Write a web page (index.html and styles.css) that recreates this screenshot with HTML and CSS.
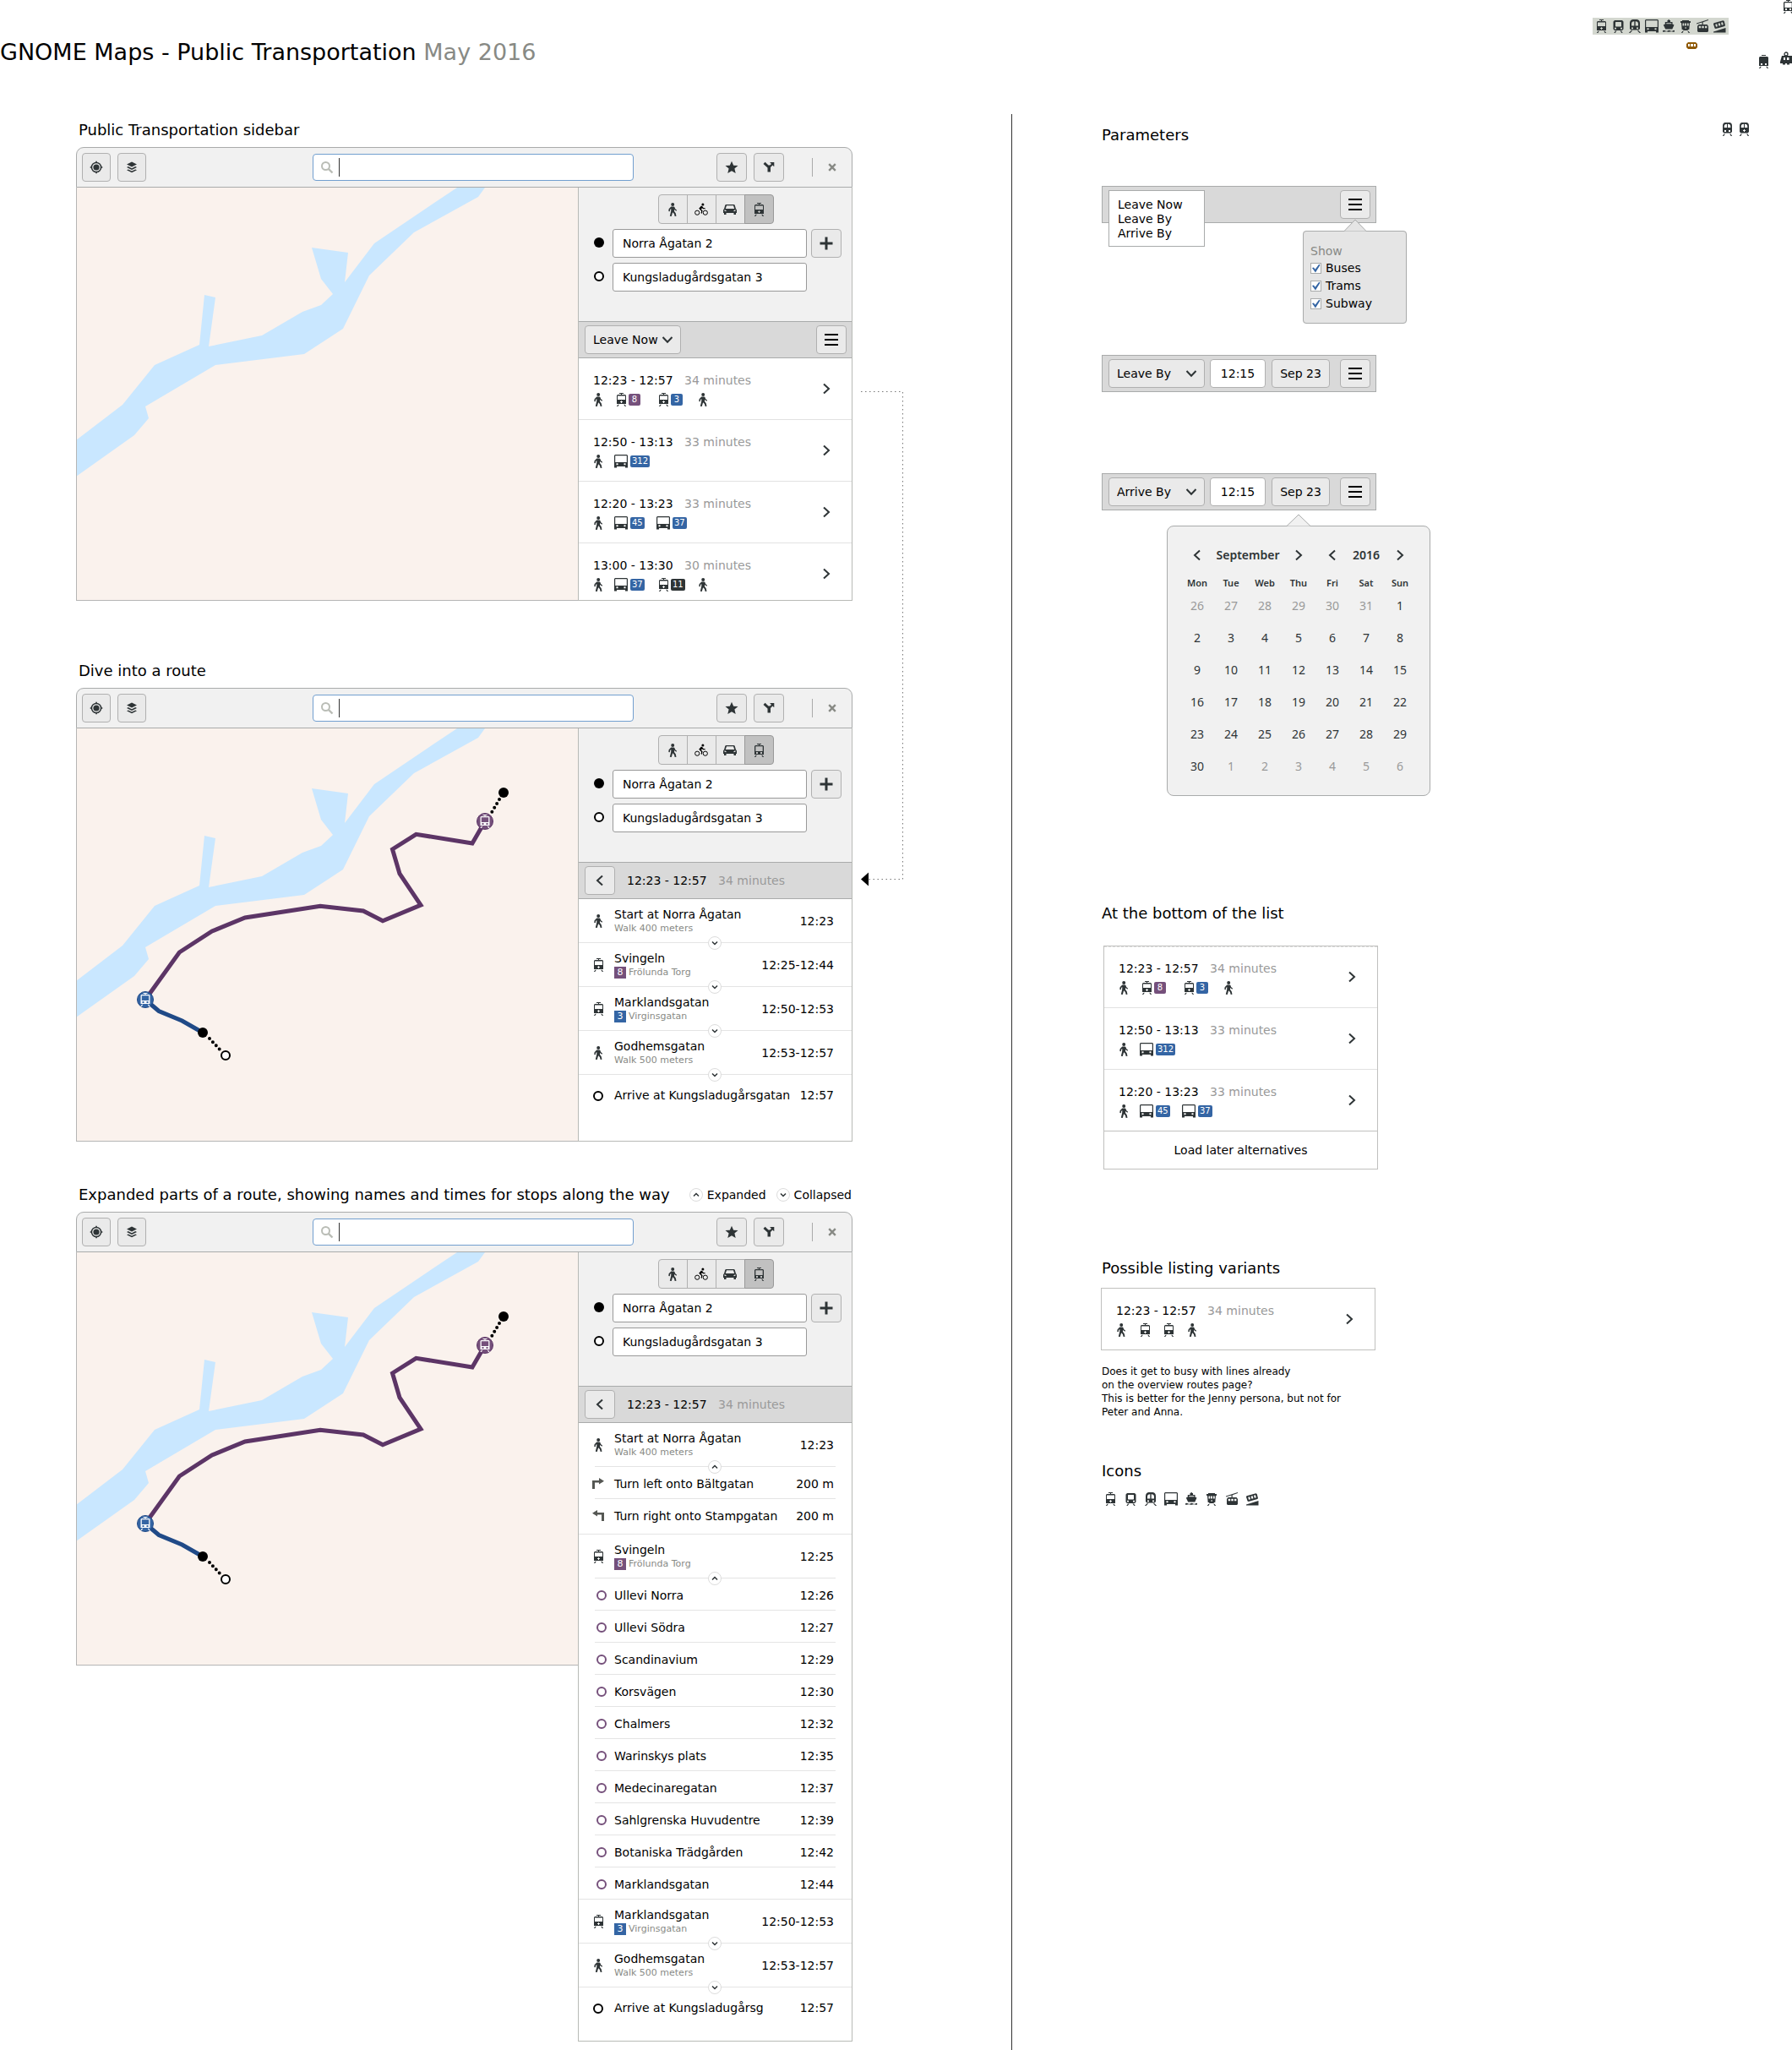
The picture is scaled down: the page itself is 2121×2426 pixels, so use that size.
FILE: index.html
```html
<!DOCTYPE html>
<html lang="en">
<head>
<meta charset="utf-8">
<meta name="viewport" content="width=device-width, initial-scale=1">
<title>GNOME Maps - Public Transportation</title>
<link rel="stylesheet" href="styles.css">
</head>
<body>
<svg class="sprite" aria-hidden="true">
  <symbol id="i-walk" viewBox="0 0 16 16"><circle cx="8.2" cy="2" r="2"/><path d="M6.3 4.4h3.2l.9.5.7 2 2 1.8-.7 1-2.3-1.6-.1 2 1.7 2.2.8 3.5-1.8.2-.8-2.9-1.8-1.9-1.3 4.8-2-.3L6.200 10l.1-3-1.200 1-.3 2.200-1.500-.1.300-2.900z"/></symbol>
  <symbol id="i-bike" viewBox="0 0 16 16"><circle cx="9.900" cy="1.900" r="1.500"/><path d="M5.200 6.700 8 3.600l1.600 1 1 1.500 2.100.2v1l-2.700-.1-.9-1-1.300 1.300 1.800 1.700-.9 3.500-1.100-.2.500-2.800z"/><g fill="none" stroke="currentColor"><circle cx="3.200" cy="11.700" r="2.600"/><circle cx="12.800" cy="11.700" r="2.600"/></g></symbol>
  <symbol id="i-car" viewBox="0 0 16 16"><path fill-rule="evenodd" d="M3.500 2h9q1 0 1.300 1L15 7.200q1 .5 1 1.500V12h-1v2h-2.500v-2h-9v2H1v-2H0V8.700q0-1 1-1.500L2.200 3q.3-1 1.300-1zM4 3.300 2.800 7h10.400L12 3.300zM1.500 8.300v1.500l2 .4v-1.300zM14.500 8.300l-2 .6v1.300l2-.4z"/></symbol>
  <symbol id="i-tram" viewBox="0 0 16 16"><path fill-rule="evenodd" d="M6 0h5v1H6zM8 1h1v1H8zM4 2h9l1 1v10H3V3zM4 3.400V8h9V3.400zM8 9.200h1V10h.9v1H9v.9H8V11h-.9v-1H8z"/><path d="M4.500 13.800h1.300L4.300 16H2.800zM12.500 13.800h-1.300l1.500 2.200h1.500z"/></symbol>
  <symbol id="i-tram-dots" viewBox="0 0 16 16"><path fill-rule="evenodd" d="M6 0h5v1H6zM8 1h1v1H8zM4 2h9l1 1v10H3V3zM4.300 3.300V9h8.400V3.300zM5 10v2h2v-2zM10 10v2h2v-2z"/><path d="M4.500 13.800h1.300L4.300 16H2.800zM12.500 13.800h-1.300l1.500 2.200h1.500z"/></symbol>
  <symbol id="i-tram-solid" viewBox="0 0 16 16"><path fill-rule="evenodd" d="M6 0h5v1H6zM4 2h9l1 1v10H3V3zM5 10v2h2v-2zM10 10v2h2v-2z"/><path d="M4.500 13.800h1.300L4.300 16H2.800zM12.500 13.800h-1.300l1.500 2.200h1.500z"/></symbol>
  <symbol id="i-metro" viewBox="0 0 16 16"><path fill-rule="evenodd" d="M4 1h9l1.500 1.500v9L13 13H4l-1.500-1.500v-9zM5.500 3 5 3.500V8l.5.500h6L12 8V3.500l-.5-.5zM4 9.800v1.700h2V9.800zM11 9.800v1.700h2V9.800z"/><path d="M5 13.600h1.500L4.700 16H3.300zM12 13.600h-1.500l1.800 2.400h1.400z"/></symbol>
  <symbol id="i-train" viewBox="0 0 16 16"><path fill-rule="evenodd" d="M5.500 0h5q3.500.5 3.500 4.500v6.500L12.500 12.500h-9L2 11V4.500Q2 .5 5.500 0zM7.300 2.200Q4 2.200 4 5.500V7.500h3.300zM8.700 2.200V7.500H12V5.500Q12 2.200 8.700 2.200zM4 9.500v1.700h2V9.500zM10 9.500v1.700h2V9.500z"/><path d="M3.500 13.300h1.700L2.500 16H.9zM12.500 13.300h-1.700L13.500 16h1.600z"/></symbol>
  <symbol id="i-train-small" viewBox="0 0 16 16"><path fill-rule="evenodd" d="M5.500 0h6Q14 .5 14 4v7l-1.500 1.500h-8L3 11V4Q3 .5 5.500 0zM8 1.800Q4.700 1.800 4.700 5v1H8zM9 1.800V6h3.300V5Q12.300 1.800 9 1.800zM5 9v2h2V9zM10 9v2h2V9z"/><path d="M4.500 13.600h1.300L4.300 16H2.800zM12.500 13.600h-1.300l1.500 2.400h1.500z"/></symbol>
  <symbol id="i-train-lamp" viewBox="0 0 16 16"><path fill-rule="evenodd" d="M5.500 0h6Q14 .5 14 4v7l-1.500 1.500h-8L3 11V4Q3 .5 5.500 0zM8 1.800Q4.700 1.800 4.700 5v1H8zM9 1.800V6h3.300V5Q12.300 1.800 9 1.800zM8 8h1v1h1v1H9v1H8v-1H7V9h1z"/><path d="M4.500 13.600h1.300L4.300 16H2.800zM12.500 13.600h-1.300l1.500 2.400h1.500z"/></symbol>
  <symbol id="i-bus" viewBox="0 0 16 16"><path fill-rule="evenodd" d="M1 0h14l1 1v14.500h-3V14H3v1.500H0V1zM1.200 1.300V9h13.600V1.300zM2.500 10.300v2h2v-2zM11.500 10.300v2h2v-2z"/></symbol>
  <symbol id="i-ship" viewBox="0 0 16 16"><path fill-rule="evenodd" d="M6.500 1h1V0h1.300v1H10v2h2.500v2.500l2 1-2.200 5H4.200L1.800 6.500l2-1V3h2.700zM5.300 4.200v1h6v-1z"/><path d="M1 13.200q1.500-1 3 0t3 0 3 0 3 0 2 0v1.300q-1.500.5-2.500 0t-3 0-3 0-3 0-2.500 0z"/></symbol>
  <symbol id="i-trolley" viewBox="0 0 16 16"><path fill-rule="evenodd" d="M4 1h8v1h2v2h-1l-.7 8h-1.300l-.5 1h-5L5 12H3.700L3 4H2V2h2zM4.500 4.500v3h1.800v-3zM7.200 4.500v3H9v-3zM10 4.500v3h1.700v-3zM7.500 9.200v1.500h1.300V9.200z"/><path d="M4.500 13.800h1.300L4.300 16H2.800zM11.500 13.800h-1.300l1.500 2.200h1.500z"/></symbol>
  <symbol id="i-cable" viewBox="0 0 16 16"><path fill-rule="evenodd" d="M1 4.600 15 0v1L8.700 3.200V6h4.800l1.500 2v6l-1 1H3l-1-1V8l1.500-2h4V3.600L1 5.600zM3.700 7.700v2.600h2.500V7.700zM7.300 7.700v2.600h2.500V7.700zM11 7.700v2.600h2.400V7.700z"/></symbol>
  <symbol id="i-funicular" viewBox="0 0 16 16"><path fill-rule="evenodd" d="M1.600 4.200 12.500 1.200l1.200.8 1.300 5-.7 1L3.800 11l-1.200-.6L.9 5.300zM3.200 5.700l.8 3 2-.5-.8-3zM6.600 4.800l.8 3 2-.6-.8-3zM10 3.800l.8 3 2-.6-.8-3z"/><path d="M1 14.500 15.500 10v5.500H1z"/></symbol>
  <symbol id="i-loco" viewBox="0 0 16 16"><path fill-rule="evenodd" d="M3 5h13v9H1v-2zM5 7v3h2V7zM9 7v3h2.500V7z"/><path d="M4 13.500h3v2H4zM9 13.500h3v2H9z"/><circle cx="8" cy="3" r="2" fill="none" stroke="currentColor" stroke-width="1.300"/></symbol>
  <symbol id="i-locate" viewBox="0 0 16 16"><circle cx="8" cy="8" r="3.600"/><circle cx="8" cy="8" r="5.600" fill="none" stroke="currentColor" stroke-width="1.500"/><path d="M7.200.7h1.600v2H7.200zM7.200 13.300h1.600v2H7.200zM.7 7.200h2v1.600h-2zM13.300 7.200h2v1.600h-2z"/></symbol>
  <symbol id="i-layers" viewBox="0 0 16 16"><path d="M8 1.500 14 4.500 8 7.500 2 4.500zM2 8l1.800-.9L8 9.200l4.200-2.100L14 8l-6 3zM2 11.300l1.800-.9L8 12.500l4.200-2.100 1.800.9-6 3z"/></symbol>
  <symbol id="i-search" viewBox="0 0 16 16"><g fill="none" stroke="currentColor" stroke-width="2"><circle cx="6.500" cy="6.500" r="4.500"/><path d="m9.800 9.800 4.700 4.700" stroke-width="2.400"/></g></symbol>
  <symbol id="i-star" viewBox="0 0 16 16"><path d="m8 .8 2.200 4.900 5.300.4-4.100 3.500 1.300 5.400L8 12.200 3.300 15l1.300-5.400L.5 6.100l5.300-.4z"/></symbol>
  <symbol id="i-route" viewBox="0 0 16 16"><path d="M1.500 4 3.600 1.800l3.900 3.700h1.800L11 4 9.300 2.300V2h5v5H14l-1.600-1.600L10 8v5.500H6.500V8.500z"/></symbol>
  <symbol id="i-close" viewBox="0 0 16 16"><path d="m4.200 4.200 7.600 7.600m0-7.600-7.600 7.600" stroke="currentColor" stroke-width="2.400"/></symbol>
  <symbol id="i-plus" viewBox="0 0 16 16"><path d="M6.500.5h3v6h6v3h-6v6h-3v-6h-6v-3h6z"/></symbol>
  <symbol id="i-menu" viewBox="0 0 16 16"><path d="M0 1h16v2H0zM0 7h16v2H0zM0 13h16v2H0z"/></symbol>
  <symbol id="i-down" viewBox="0 0 16 16"><path d="m2.500 5 5.500 5.700L13.500 5" fill="none" stroke="currentColor" stroke-width="2"/></symbol>
  <symbol id="i-next" viewBox="0 0 16 16"><path d="M5 2.500 11 8l-6 5.500" fill="none" stroke="currentColor" stroke-width="2"/></symbol>
  <symbol id="i-prev" viewBox="0 0 16 16"><path d="M11 2.500 5 8l6 5.500" fill="none" stroke="currentColor" stroke-width="2"/></symbol>
  <symbol id="i-small-down" viewBox="0 0 16 16"><path d="m5 6.500 3 3 3-3" fill="none" stroke="currentColor" stroke-width="1.500"/></symbol>
  <symbol id="i-small-up" viewBox="0 0 16 16"><path d="m5 9.500 3-3 3 3" fill="none" stroke="currentColor" stroke-width="1.500"/></symbol>
  <symbol id="i-dot" viewBox="0 0 16 16"><circle cx="8" cy="8" r="6"/></symbol>
  <symbol id="i-ring" viewBox="0 0 16 16"><circle cx="8" cy="8" r="5" fill="#fff" stroke="currentColor" stroke-width="2"/></symbol>
  <symbol id="i-turn-right" viewBox="0 0 16 16"><path d="M1 14V4h8V1l6 3.800-6 3.700V6.500H4V14z"/></symbol>
  <symbol id="i-turn-left" viewBox="0 0 16 16"><path d="M15 14V4H7V1L1 4.800l6 3.700V6.500h5V14z"/></symbol>
  <symbol id="map-river" viewBox="0 0 593 488"><path fill="#c9e7ff" d="M-1 299 54 257 92 210 145 186 151 127 164 130 156 188 219 175 267 147 289 139 303 126 289 108 278 71 321 77 317 112 352 66 429 14 450 0H483L475 11 399 53 346 104 315 167 269 197 164 210 81 259 85 273 68 293 -1 342z"/></symbol>
  <symbol id="map-route" viewBox="0 0 593 488">
    <path d="M483 110 468 136 401.500 125.300 373.500 143 382 172 407 209 362 227.700 339 216 288 210.300 199 224 160 240 121.300 265 81 321" fill="none" stroke="#5c3566" stroke-width="5"/>
    <path d="M81 321 97 334.500 124.500 346 149 360" fill="none" stroke="#204a87" stroke-width="5"/>
    <path d="M500 84 490 101M157 367 171 382" fill="none" stroke="#000" stroke-width="4" stroke-linecap="round" stroke-dasharray="0 5.700"/>
    <circle cx="505" cy="76" r="6"/><circle cx="149" cy="360" r="6"/>
    <circle cx="176" cy="387" r="5" fill="#fff" stroke="#000" stroke-width="2"/>
    <circle cx="483" cy="110" r="9.500" fill="#75507b" stroke="#5c3566"/>
    <circle cx="81" cy="321" r="9.500" fill="#3465a4" stroke="#204a87"/>
    <use href="#i-tram-dots" x="474.500" y="102" width="16" height="16" fill="#fff"/>
    <use href="#i-tram-dots" x="72.500" y="313" width="16" height="16" fill="#fff"/>
  </symbol>
</svg>

<div class="page">
  <header class="page__head">
    <h1 class="page__title">GNOME Maps - Public Transportation <span class="muted-title">May 2016</span></h1>
  </header>

  <div class="scrap" aria-hidden="true">
    <div class="scrap__strip">
      <svg class="icon"><use href="#i-tram"/></svg><svg class="icon"><use href="#i-metro"/></svg><svg class="icon"><use href="#i-train"/></svg><svg class="icon"><use href="#i-bus"/></svg><svg class="icon"><use href="#i-ship"/></svg><svg class="icon"><use href="#i-trolley"/></svg><svg class="icon"><use href="#i-cable"/></svg><svg class="icon"><use href="#i-funicular"/></svg>
    </div>
    <svg class="scrap__car" viewBox="0 0 13 8"><path fill="#8f5902" fill-rule="evenodd" d="M2 0h9l2 2v4l-2 2H2L0 6V2zM2 2v3h2V2zM5 2v3h3V2zM9 2v3h2V2z"/></svg>
    <svg class="icon scrap__tram"><use href="#i-tram-dots"/></svg>
    <svg class="icon scrap__solid"><use href="#i-tram-solid"/></svg>
    <svg class="icon scrap__loco"><use href="#i-loco"/></svg>
    <svg class="icon scrap__train-a"><use href="#i-train-small"/></svg>
    <svg class="icon scrap__train-b"><use href="#i-train-lamp"/></svg>
  </div>

  <main class="board">
    <div class="flow">
      <div class="flow__screens">

        <section class="screen">
          <div class="screen__head"><h2 class="heading">Public Transportation sidebar</h2></div>
          <div class="window window--clipped">
            <div class="headerbar">
              <div class="headerbar__start">
                <button class="btn btn--square" aria-label="Current location"><svg class="icon"><use href="#i-locate"/></svg></button>
                <button class="btn btn--square" aria-label="Layers"><svg class="icon"><use href="#i-layers"/></svg></button>
              </div>
              <label class="search"><svg class="icon search__icon"><use href="#i-search"/></svg><span class="search__caret"></span><input class="search__input" type="text" aria-label="Search"></label>
              <div class="headerbar__end">
                <button class="btn" aria-label="Favorites"><svg class="icon"><use href="#i-star"/></svg></button>
                <button class="btn" aria-label="Route planner"><svg class="icon"><use href="#i-route"/></svg></button>
                <span class="headerbar__rule"></span>
                <button class="close" aria-label="Close"><svg class="icon"><use href="#i-close"/></svg></button>
              </div>
            </div>
            <div class="window__body">
              <div class="map"><svg class="map__layer" preserveAspectRatio="xMidYMid slice" viewBox="0 0 593 488"><use href="#map-river"/></svg></div>
              <aside class="sidebar">
                <div class="planner">
                  <div class="modes">
                    <button class="modes__item" aria-label="Walk"><svg class="icon"><use href="#i-walk"/></svg></button><button class="modes__item modes__item--black" aria-label="Bike"><svg class="icon"><use href="#i-bike"/></svg></button><button class="modes__item" aria-label="Car"><svg class="icon"><use href="#i-car"/></svg></button><button class="modes__item modes__item--on" aria-label="Transit" aria-pressed="true"><svg class="icon"><use href="#i-tram"/></svg></button>
                  </div>
                  <div class="place"><svg class="icon"><use href="#i-dot"/></svg><input class="place__input" type="text" aria-label="From" value="Norra Ågatan 2"><button class="btn" aria-label="Add stop"><svg class="icon"><use href="#i-plus"/></svg></button></div>
                  <div class="place"><svg class="icon"><use href="#i-ring"/></svg><input class="place__input" type="text" aria-label="To" value="Kungsladugårdsgatan 3"></div>
                </div>
                <div class="bar">
                  <span class="drop"><select class="drop__select" aria-label="Time"><option>Leave Now</option></select><svg class="icon drop__arrow"><use href="#i-down"/></svg></span>
                  <button class="btn bar__menu" aria-label="Options"><svg class="icon icon--black"><use href="#i-menu"/></svg></button>
                </div>
                <div class="trips">
                  <a class="trip" href="#route"><span class="trip__main"><span class="trip__when">12:23 - 12:57 <span class="trip__len">34 minutes</span></span><span class="legs"><span class="leg"><svg class="icon"><use href="#i-walk"/></svg></span><span class="leg"><svg class="icon"><use href="#i-tram"/></svg><span class="line line--purple">8</span></span><span class="leg"><svg class="icon"><use href="#i-tram"/></svg><span class="line">3</span></span><span class="leg"><svg class="icon"><use href="#i-walk"/></svg></span></span></span><svg class="icon trip__go"><use href="#i-next"/></svg></a>
                  <a class="trip" href="#route"><span class="trip__main"><span class="trip__when">12:50 - 13:13 <span class="trip__len">33 minutes</span></span><span class="legs"><span class="leg"><svg class="icon"><use href="#i-walk"/></svg></span><span class="leg leg--bus"><svg class="icon"><use href="#i-bus"/></svg><span class="line">312</span></span></span></span><svg class="icon trip__go"><use href="#i-next"/></svg></a>
                  <a class="trip" href="#route"><span class="trip__main"><span class="trip__when">12:20 - 13:23 <span class="trip__len">33 minutes</span></span><span class="legs"><span class="leg"><svg class="icon"><use href="#i-walk"/></svg></span><span class="leg leg--bus"><svg class="icon"><use href="#i-bus"/></svg><span class="line">45</span></span><span class="leg leg--bus"><svg class="icon"><use href="#i-bus"/></svg><span class="line">37</span></span></span></span><svg class="icon trip__go"><use href="#i-next"/></svg></a>
                  <a class="trip" href="#route"><span class="trip__main"><span class="trip__when">13:00 - 13:30 <span class="trip__len">30 minutes</span></span><span class="legs"><span class="leg"><svg class="icon"><use href="#i-walk"/></svg></span><span class="leg leg--bus"><svg class="icon"><use href="#i-bus"/></svg><span class="line">37</span></span><span class="leg"><svg class="icon"><use href="#i-tram"/></svg><span class="line line--dark">11</span></span><span class="leg"><svg class="icon"><use href="#i-walk"/></svg></span></span></span><svg class="icon trip__go"><use href="#i-next"/></svg></a>
                </div>
              </aside>
            </div>
          </div>
        </section>

        <section class="screen screen--route" id="route">
          <div class="screen__head"><h2 class="heading">Dive into a route</h2></div>
          <div class="window">
            <div class="headerbar">
              <div class="headerbar__start">
                <button class="btn btn--square" aria-label="Current location"><svg class="icon"><use href="#i-locate"/></svg></button>
                <button class="btn btn--square" aria-label="Layers"><svg class="icon"><use href="#i-layers"/></svg></button>
              </div>
              <label class="search"><svg class="icon search__icon"><use href="#i-search"/></svg><span class="search__caret"></span><input class="search__input" type="text" aria-label="Search"></label>
              <div class="headerbar__end">
                <button class="btn" aria-label="Favorites"><svg class="icon"><use href="#i-star"/></svg></button>
                <button class="btn" aria-label="Route planner"><svg class="icon"><use href="#i-route"/></svg></button>
                <span class="headerbar__rule"></span>
                <button class="close" aria-label="Close"><svg class="icon"><use href="#i-close"/></svg></button>
              </div>
            </div>
            <div class="window__body">
              <div class="map"><svg class="map__layer" preserveAspectRatio="xMidYMid slice" viewBox="0 0 593 488"><use href="#map-river"/><use href="#map-route"/></svg></div>
              <aside class="sidebar">
                <div class="planner">
                  <div class="modes">
                    <button class="modes__item" aria-label="Walk"><svg class="icon"><use href="#i-walk"/></svg></button><button class="modes__item modes__item--black" aria-label="Bike"><svg class="icon"><use href="#i-bike"/></svg></button><button class="modes__item" aria-label="Car"><svg class="icon"><use href="#i-car"/></svg></button><button class="modes__item modes__item--on" aria-label="Transit" aria-pressed="true"><svg class="icon"><use href="#i-tram-dots"/></svg></button>
                  </div>
                  <div class="place"><svg class="icon"><use href="#i-dot"/></svg><input class="place__input" type="text" aria-label="From" value="Norra Ågatan 2"><button class="btn" aria-label="Add stop"><svg class="icon"><use href="#i-plus"/></svg></button></div>
                  <div class="place"><svg class="icon"><use href="#i-ring"/></svg><input class="place__input" type="text" aria-label="To" value="Kungsladugårdsgatan 3"></div>
                </div>
                <div class="bar">
                  <button class="btn" aria-label="Back"><svg class="icon"><use href="#i-prev"/></svg></button>
                  <span class="bar__when">12:23 - 12:57 <span class="trip__len">34 minutes</span></span>
                </div>
                <ol class="steps">
                  <li class="step"><svg class="icon"><use href="#i-walk"/></svg><span class="step__text">Start at Norra Ågatan<span class="step__sub">Walk 400 meters</span></span><time>12:23</time><button class="fold" aria-label="Expand"><svg class="icon"><use href="#i-small-down"/></svg></button></li>
                  <li class="step"><svg class="icon"><use href="#i-tram"/></svg><span class="step__text">Svingeln<span class="step__sub"><b class="num num--purple">8</b>Frölunda Torg</span></span><time>12:25-12:44</time><button class="fold" aria-label="Expand"><svg class="icon"><use href="#i-small-down"/></svg></button></li>
                  <li class="step"><svg class="icon"><use href="#i-tram"/></svg><span class="step__text">Marklandsgatan<span class="step__sub"><b class="num">3</b>Virginsgatan</span></span><time>12:50-12:53</time><button class="fold" aria-label="Expand"><svg class="icon"><use href="#i-small-down"/></svg></button></li>
                  <li class="step"><svg class="icon"><use href="#i-walk"/></svg><span class="step__text">Godhemsgatan<span class="step__sub">Walk 500 meters</span></span><time>12:53-12:57</time><button class="fold" aria-label="Expand"><svg class="icon"><use href="#i-small-down"/></svg></button></li>
                  <li class="step step--end"><svg class="icon icon--black"><use href="#i-ring"/></svg><span class="step__text">Arrive at Kungsladugårsgatan</span><time>12:57</time></li>
                </ol>
              </aside>
            </div>
          </div>
        </section>

        <section class="screen screen--expanded">
          <div class="screen__head">
            <h2 class="heading">Expanded parts of a route, showing names and times for stops along the way</h2>
            <span class="legend"><span class="fold fold--key"><svg class="icon"><use href="#i-small-up"/></svg></span>Expanded</span>
            <span class="legend"><span class="fold fold--key"><svg class="icon"><use href="#i-small-down"/></svg></span>Collapsed</span>
          </div>
          <div class="window">
            <div class="headerbar">
              <div class="headerbar__start">
                <button class="btn btn--square" aria-label="Current location"><svg class="icon"><use href="#i-locate"/></svg></button>
                <button class="btn btn--square" aria-label="Layers"><svg class="icon"><use href="#i-layers"/></svg></button>
              </div>
              <label class="search"><svg class="icon search__icon"><use href="#i-search"/></svg><span class="search__caret"></span><input class="search__input" type="text" aria-label="Search"></label>
              <div class="headerbar__end">
                <button class="btn" aria-label="Favorites"><svg class="icon"><use href="#i-star"/></svg></button>
                <button class="btn" aria-label="Route planner"><svg class="icon"><use href="#i-route"/></svg></button>
                <span class="headerbar__rule"></span>
                <button class="close" aria-label="Close"><svg class="icon"><use href="#i-close"/></svg></button>
              </div>
            </div>
            <div class="window__body">
              <div class="map"><svg class="map__layer" preserveAspectRatio="xMidYMid slice" viewBox="0 0 593 488"><use href="#map-river"/><use href="#map-route"/></svg></div>
              <aside class="sidebar">
                <div class="planner">
                  <div class="modes">
                    <button class="modes__item" aria-label="Walk"><svg class="icon"><use href="#i-walk"/></svg></button><button class="modes__item modes__item--black" aria-label="Bike"><svg class="icon"><use href="#i-bike"/></svg></button><button class="modes__item" aria-label="Car"><svg class="icon"><use href="#i-car"/></svg></button><button class="modes__item modes__item--on" aria-label="Transit" aria-pressed="true"><svg class="icon"><use href="#i-tram-dots"/></svg></button>
                  </div>
                  <div class="place"><svg class="icon"><use href="#i-dot"/></svg><input class="place__input" type="text" aria-label="From" value="Norra Ågatan 2"><button class="btn" aria-label="Add stop"><svg class="icon"><use href="#i-plus"/></svg></button></div>
                  <div class="place"><svg class="icon"><use href="#i-ring"/></svg><input class="place__input" type="text" aria-label="To" value="Kungsladugårdsgatan 3"></div>
                </div>
                <div class="bar">
                  <button class="btn" aria-label="Back"><svg class="icon"><use href="#i-prev"/></svg></button>
                  <span class="bar__when">12:23 - 12:57 <span class="trip__len">34 minutes</span></span>
                </div>
                <ol class="steps">
                  <li class="step step--open"><svg class="icon"><use href="#i-walk"/></svg><span class="step__text">Start at Norra Ågatan<span class="step__sub">Walk 400 meters</span></span><time>12:23</time><button class="fold" aria-label="Collapse"><svg class="icon"><use href="#i-small-up"/></svg></button></li>
                  <li class="step step--open step--stop"><svg class="icon icon--turn"><use href="#i-turn-right"/></svg><span class="step__text">Turn left onto Bältgatan</span><span>200 m</span></li>
                  <li class="step step--turn-last"><svg class="icon icon--turn"><use href="#i-turn-left"/></svg><span class="step__text">Turn right onto Stampgatan</span><span>200 m</span></li>
                  <li class="step step--open"><svg class="icon"><use href="#i-tram"/></svg><span class="step__text">Svingeln<span class="step__sub"><b class="num num--purple">8</b>Frölunda Torg</span></span><time>12:25</time><button class="fold" aria-label="Collapse"><svg class="icon"><use href="#i-small-up"/></svg></button></li>
                  <li class="step step--open step--stop"><svg class="icon icon--stop"><use href="#i-ring"/></svg><span class="step__text">Ullevi Norra</span><time>12:26</time></li>
                  <li class="step step--open step--stop"><svg class="icon icon--stop"><use href="#i-ring"/></svg><span class="step__text">Ullevi Södra</span><time>12:27</time></li>
                  <li class="step step--open step--stop"><svg class="icon icon--stop"><use href="#i-ring"/></svg><span class="step__text">Scandinavium</span><time>12:29</time></li>
                  <li class="step step--open step--stop"><svg class="icon icon--stop"><use href="#i-ring"/></svg><span class="step__text">Korsvägen</span><time>12:30</time></li>
                  <li class="step step--open step--stop"><svg class="icon icon--stop"><use href="#i-ring"/></svg><span class="step__text">Chalmers</span><time>12:32</time></li>
                  <li class="step step--open step--stop"><svg class="icon icon--stop"><use href="#i-ring"/></svg><span class="step__text">Warinskys plats</span><time>12:35</time></li>
                  <li class="step step--open step--stop"><svg class="icon icon--stop"><use href="#i-ring"/></svg><span class="step__text">Medecinaregatan</span><time>12:37</time></li>
                  <li class="step step--open step--stop"><svg class="icon icon--stop"><use href="#i-ring"/></svg><span class="step__text">Sahlgrenska Huvudentre</span><time>12:39</time></li>
                  <li class="step step--open step--stop"><svg class="icon icon--stop"><use href="#i-ring"/></svg><span class="step__text">Botaniska Trädgården</span><time>12:42</time></li>
                  <li class="step step--stop"><svg class="icon icon--stop"><use href="#i-ring"/></svg><span class="step__text">Marklandsgatan</span><time>12:44</time></li>
                  <li class="step"><svg class="icon"><use href="#i-tram"/></svg><span class="step__text">Marklandsgatan<span class="step__sub"><b class="num">3</b>Virginsgatan</span></span><time>12:50-12:53</time><button class="fold" aria-label="Expand"><svg class="icon"><use href="#i-small-down"/></svg></button></li>
                  <li class="step"><svg class="icon"><use href="#i-walk"/></svg><span class="step__text">Godhemsgatan<span class="step__sub">Walk 500 meters</span></span><time>12:53-12:57</time><button class="fold" aria-label="Expand"><svg class="icon"><use href="#i-small-down"/></svg></button></li>
                  <li class="step step--end"><svg class="icon icon--black"><use href="#i-ring"/></svg><span class="step__text">Arrive at Kungsladugårsg</span><time>12:57</time></li>
                </ol>
              </aside>
            </div>
          </div>
        </section>
      </div>

      <svg class="connector" viewBox="0 0 52 588" aria-hidden="true"><path d="M0 .5H49.500V577.500H9" fill="none" stroke="#777" stroke-dasharray="1.500 3.500"/><path d="M0 577.500 9 569.500V585.500z"/></svg>
    </div>

    <div class="notes">
      <h2 class="heading">Parameters</h2>

      <div class="bar bar--solo bar--first">
        <ul class="options" role="listbox" aria-label="Time"><li role="option">Leave Now</li><li role="option">Leave By</li><li role="option">Arrive By</li></ul>
        <button class="btn bar__menu" aria-label="Options"><svg class="icon icon--black"><use href="#i-menu"/></svg></button>
        <fieldset class="popover">
          <svg class="popover__tip" viewBox="0 0 28 15"><path d="M1 14.500 14 1 27 14.500" /></svg>
          <legend class="popover__legend">Show</legend>
          <label class="check"><input type="checkbox" checked>Buses</label>
          <label class="check"><input type="checkbox" checked>Trams</label>
          <label class="check"><input type="checkbox" checked>Subway</label>
        </fieldset>
      </div>

      <div class="bar bar--solo bar--leave">
        <span class="drop"><select class="drop__select" aria-label="Time"><option>Leave By</option></select><svg class="icon drop__arrow"><use href="#i-down"/></svg></span>
        <input class="clock" type="text" aria-label="Clock" value="12:15">
        <button class="btn btn--date">Sep 23</button>
        <button class="btn bar__menu" aria-label="Options"><svg class="icon icon--black"><use href="#i-menu"/></svg></button>
      </div>

      <div class="bar bar--solo bar--arrive">
        <span class="drop"><select class="drop__select" aria-label="Time"><option>Arrive By</option></select><svg class="icon drop__arrow"><use href="#i-down"/></svg></span>
        <input class="clock" type="text" aria-label="Clock" value="12:15">
        <button class="btn btn--date">Sep 23</button>
        <button class="btn bar__menu" aria-label="Options"><svg class="icon icon--black"><use href="#i-menu"/></svg></button>
      </div>

      <div class="calendar">
        <svg class="calendar__tip" viewBox="0 0 28 15"><path d="M0 14.500 14 1 28 14.500"/></svg>
        <div class="calendar__nav">
          <button class="flat" aria-label="Previous month"><svg class="icon"><use href="#i-prev"/></svg></button><span class="calendar__month">September</span><button class="flat" aria-label="Next month"><svg class="icon"><use href="#i-next"/></svg></button><button class="flat" aria-label="Previous year"><svg class="icon"><use href="#i-prev"/></svg></button><span>2016</span><button class="flat" aria-label="Next year"><svg class="icon"><use href="#i-next"/></svg></button>
        </div>
        <table class="calendar__days">
          <thead><tr><th>Mon</th><th>Tue</th><th>Web</th><th>Thu</th><th>Fri</th><th>Sat</th><th>Sun</th></tr></thead>
          <tbody>
            <tr><td class="out">26</td><td class="out">27</td><td class="out">28</td><td class="out">29</td><td class="out">30</td><td class="out">31</td><td>1</td></tr>
            <tr><td>2</td><td>3</td><td>4</td><td>5</td><td>6</td><td>7</td><td>8</td></tr>
            <tr><td>9</td><td>10</td><td>11</td><td>12</td><td>13</td><td>14</td><td>15</td></tr>
            <tr><td>16</td><td>17</td><td>18</td><td>19</td><td>20</td><td>21</td><td>22</td></tr>
            <tr><td>23</td><td>24</td><td>25</td><td>26</td><td>27</td><td>28</td><td>29</td></tr>
            <tr><td>30</td><td class="out">1</td><td class="out">2</td><td class="out">3</td><td class="out">4</td><td class="out">5</td><td class="out">6</td></tr>
          </tbody>
        </table>
      </div>

      <h2 class="heading heading--list">At the bottom of the list</h2>
      <div class="card card--list">
        <a class="trip" href="#route"><span class="trip__main"><span class="trip__when">12:23 - 12:57 <span class="trip__len">34 minutes</span></span><span class="legs"><span class="leg"><svg class="icon"><use href="#i-walk"/></svg></span><span class="leg"><svg class="icon"><use href="#i-tram"/></svg><span class="line line--purple">8</span></span><span class="leg"><svg class="icon"><use href="#i-tram"/></svg><span class="line">3</span></span><span class="leg"><svg class="icon"><use href="#i-walk"/></svg></span></span></span><svg class="icon trip__go"><use href="#i-next"/></svg></a>
        <a class="trip" href="#route"><span class="trip__main"><span class="trip__when">12:50 - 13:13 <span class="trip__len">33 minutes</span></span><span class="legs"><span class="leg"><svg class="icon"><use href="#i-walk"/></svg></span><span class="leg leg--bus"><svg class="icon"><use href="#i-bus"/></svg><span class="line">312</span></span></span></span><svg class="icon trip__go"><use href="#i-next"/></svg></a>
        <a class="trip trip--last" href="#route"><span class="trip__main"><span class="trip__when">12:20 - 13:23 <span class="trip__len">33 minutes</span></span><span class="legs"><span class="leg"><svg class="icon"><use href="#i-walk"/></svg></span><span class="leg leg--bus"><svg class="icon"><use href="#i-bus"/></svg><span class="line">45</span></span><span class="leg leg--bus"><svg class="icon"><use href="#i-bus"/></svg><span class="line">37</span></span></span></span><svg class="icon trip__go"><use href="#i-next"/></svg></a>
        <button class="more">Load later alternatives</button>
      </div>

      <h2 class="heading heading--variants">Possible listing variants</h2>
      <div class="card card--variant">
        <a class="trip" href="#route"><span class="trip__main"><span class="trip__when">12:23 - 12:57 <span class="trip__len">34 minutes</span></span><span class="legs legs--plain"><svg class="icon"><use href="#i-walk"/></svg><svg class="icon"><use href="#i-tram"/></svg><svg class="icon"><use href="#i-tram"/></svg><svg class="icon"><use href="#i-walk"/></svg></span></span><svg class="icon trip__go"><use href="#i-next"/></svg></a>
      </div>
      <p class="remark">Does it get to busy with lines already<br>on the overview routes page?<br>This is better for the Jenny persona, but not for<br>Peter and Anna.</p>

      <h2 class="heading heading--icons">Icons</h2>
      <div class="iconset">
        <svg class="icon"><use href="#i-tram"/></svg><svg class="icon"><use href="#i-metro"/></svg><svg class="icon"><use href="#i-train"/></svg><svg class="icon"><use href="#i-bus"/></svg><svg class="icon"><use href="#i-ship"/></svg><svg class="icon"><use href="#i-trolley"/></svg><svg class="icon"><use href="#i-cable"/></svg><svg class="icon"><use href="#i-funicular"/></svg>
      </div>
    </div>
  </main>
</div>
</body>
</html>
```
FILE: styles.css
```css
*, *::before, *::after { box-sizing: border-box; }

:root {
  --ink: #2e3436;
  --line: #a9abab;
  --chrome: #f1f1f1;
}

body {
  margin: 0;
  background: #fff;
  color: #000;
  font: 14px/17px "DejaVu Sans", sans-serif;
}

button, input, select { font: inherit; color: inherit; margin: 0; }
button { display: flex; align-items: center; justify-content: center; padding: 0; }
ul, ol { list-style: none; margin: 0; padding: 0; }
h1, h2, p { margin: 0; }
a { color: inherit; text-decoration: none; }

.sprite { position: absolute; width: 0; height: 0; }

.icon { display: block; flex: none; width: 16px; height: 16px; fill: currentColor; color: var(--ink); }
.icon--black { color: #000; }
.icon--turn { color: #555753; }
.icon--stop { color: #75507b; }

/* Page frame */
.page { position: relative; display: flex; flex-direction: column; min-height: 100vh; overflow: hidden; }
.page__head { height: 135px; padding-top: 46px; }
.page__title { font-size: 27px; line-height: 32px; font-weight: 400; }
.muted-title { color: #888a85; }
.board { flex: 1; display: grid; grid-template-columns: minmax(0, 1197fr) minmax(0, 924fr); }
.heading { font-size: 18px; line-height: 22px; font-weight: 400; white-space: nowrap; }

/* Loose sketches in the corner of the canvas */
.scrap { position: absolute; top: 0; right: 0; width: 236px; height: 170px; }
.scrap__strip { display: flex; gap: 4px; width: 161px; height: 20px; padding: 2px 0 2px 2px; background: #d3d7cf; }
.scrap > * { position: absolute; }
.scrap__strip { left: 0; top: 21px; }
.scrap__car { left: 111px; top: 50px; width: 13px; height: 8px; }
.scrap__tram { left: 223px; top: 0; }
.scrap__solid { left: 194px; top: 65px; }
.scrap__loco { left: 221px; top: 61px; }
.scrap__train-a { left: 151px; top: 145px; }
.scrap__train-b { left: 171px; top: 145px; }

/* Left side: the three windows */
.flow { display: flex; align-items: flex-start; gap: 10px; padding: 8px 126px 9px 90px; }
.flow__screens { flex: 1; min-width: 0; }
.connector { flex: none; width: 52px; height: 588px; margin-top: 320px; }
.screen--route { margin-top: 72px; }
.screen--expanded { margin-top: 52px; }
.screen__head { display: flex; align-items: center; gap: 12px; padding: 0 1px 9px 3px; }
.screen__head .heading { flex: 1; }
.legend { display: flex; align-items: center; gap: 5px; }

.headerbar {
  display: grid;
  grid-template-columns: 13fr minmax(0, 380px) 12fr;
  align-items: center;
  padding: 6px;
  border: 1px solid var(--line);
  border-radius: 9px 9px 0 0;
  background: var(--chrome);
}
.headerbar__start { display: flex; gap: 8px; }
.headerbar__end { display: flex; gap: 8px; align-items: center; justify-content: flex-end; }
.headerbar__rule { width: 1px; height: 22px; margin-left: 25px; margin-right: -2px; background: #aaa; }

.btn {
  flex: none;
  width: 36px;
  height: 34px;
  border: 1px solid #b0b0b0;
  border-radius: 4px;
  background: #eaeaea;
}
.btn--square { width: 34px; }
.btn--date { width: 69px; margin-left: 7px; }
.close { width: 34px; height: 34px; border: 0; background: none; }
.close .icon { color: #888a85; }
.flat { border: 0; background: none; }

.search {
  display: flex;
  align-items: center;
  height: 32px;
  padding-left: 8px;
  border: 1px solid #729fcf;
  border-radius: 4px;
  background: #fff;
}
.search__icon { color: #babdb6; }
.search__caret { width: 1px; height: 22px; margin-left: 6px; background: #333; }
.search__input { flex: 1; min-width: 0; border: 0; outline: 0; background: none; }

.window__body { display: flex; align-items: flex-start; }
.window--clipped .window__body { max-height: 489px; }
.window--clipped .sidebar { height: 489px; overflow: hidden; }
.map {
  flex: 1;
  min-width: 0;
  height: 489px;
  border: solid #b5b5b5;
  border-width: 0 0 1px 1px;
  background: #faf2ed;
}
.map__layer { display: block; width: 100%; height: 100%; }

.sidebar { flex: none; width: 325px; min-height: 489px; border: 1px solid #b8bab6; border-top: 0; background: #fff; }
.planner { display: flex; flex-direction: column; gap: 6px; padding: 8px 12px 35px 16px; background: var(--chrome); }
.modes { display: flex; align-self: center; height: 35px; margin-right: 4px; }
.modes__item { width: 35px; margin-right: -1px; border: 1px solid #b0b0b0; background: #eaeaea; }
.modes__item:first-child { border-radius: 4px 0 0 4px; }
.modes__item:last-child { border-radius: 0 4px 4px 0; }
.modes__item--black .icon { color: #000; }
.modes__item--on { border-color: #999; background: #c1c1c1; }
.place { display: grid; grid-template-columns: 16px minmax(0, 1fr) 36px; column-gap: 5px; align-items: center; }
.place > .icon { margin-bottom: 3px; color: #000; }
.place__input { height: 34px; margin-left: 3px; padding: 0 11px; border: 1px solid #999; border-radius: 3px; background: #fff; }

.bar {
  display: flex;
  align-items: center;
  padding: 4px 6px 4px 7px;
  border: solid var(--line);
  border-width: 1px 0;
  background: #d9d9d9;
}
.bar__menu { margin-left: auto; }
.bar__when { margin-left: 14px; white-space: nowrap; }
.drop { position: relative; width: 114px; height: 34px; }
.drop__select {
  appearance: none;
  width: 100%;
  height: 100%;
  padding: 0 9px;
  border: 1px solid #b0b0b0;
  border-radius: 4px;
  background: #eaeaea;
}
.drop__arrow { position: absolute; right: 8px; top: 9px; pointer-events: none; }
.clock { width: 66px; height: 34px; margin-left: 6px; padding: 0; border: 1px solid #b0b0b0; border-radius: 4px; background: #fff; text-align: center; }

/* Trip list */
.trip { display: flex; align-items: center; justify-content: space-between; height: 73px; padding: 0 22px 0 15px; border-bottom: 1px solid #e2e2e2; }
.trip__main { display: flex; flex-direction: column; gap: 6px; padding-top: 2px; }
.trip__when { padding-left: 2px; white-space: nowrap; }
.trip__len { margin-left: 9px; color: #999; }
.legs { display: grid; grid-template-columns: 27px 50px 47px auto; }
.leg { display: flex; align-items: center; gap: 1px; }
.leg--bus { gap: 3px; }
.legs--plain { display: flex; gap: 12px; }
.line {
  min-width: 14px;
  padding: 0 2px;
  border-radius: 2px;
  background: #3465a4;
  color: #fff;
  font-size: 10px;
  line-height: 14px;
  text-align: center;
}
.line--purple { background: #75507b; }
.line--dark { background: var(--ink); }

/* Route steps */
.step {
  position: relative;
  display: grid;
  grid-template-columns: 16px minmax(0, 1fr) auto;
  column-gap: 11px;
  align-items: center;
  height: 52px;
  padding: 0 21px 0 15px;
  white-space: nowrap;
}
.step::after { content: ""; position: absolute; left: 0; right: 0; bottom: 0; height: 1px; background: #e4e4e4; }
.step--open::after { left: 19px; right: 19px; }
.step--stop { height: 38px; padding-top: 2px; }
.step--turn-last { height: 42px; padding-bottom: 2px; }
.step--end { height: 63px; padding-bottom: 14px; }
.step--end::after { display: none; }
.icon--stop { margin-left: 4px; }
.step__sub { display: flex; align-items: center; gap: 3px; height: 16px; color: #888a85; font-size: 11px; }
.num { width: 14px; background: #3465a4; color: #fff; font-size: 11px; font-weight: 400; line-height: 14px; text-align: center; }
.num--purple { background: #75507b; }
.fold {
  position: absolute;
  z-index: 1;
  left: calc(50% - 9px);
  bottom: -8px;
  display: block;
  width: 16px;
  height: 16px;
  border: 1px solid #dcdcdc;
  border-radius: 50%;
  background: #fff;
}
.fold .icon { margin: -1px; }
.fold--key { position: static; }

/* Right side: notes */
.notes { padding: 14px 0 40px 106px; border-left: 1px solid #333; }
.bar--solo { position: relative; width: 325px; height: 44px; border-width: 1px; }
.bar--first { margin-top: 49px; }
.bar--leave { margin-top: 156px; }
.bar--arrive { margin-top: 96px; }
.options { position: absolute; left: 7px; top: 4px; width: 114px; padding: 8px 10px 6px; border: 1px solid var(--line); background: #fff; }

.popover { position: absolute; left: 237px; top: 52px; width: 123px; height: 110px; margin: 0; padding: 14px 8px 0; border: 1px solid var(--line); border-radius: 4px; background: #e5e5e5; }
.popover__tip { position: absolute; left: 47px; top: -15px; width: 28px; height: 15px; fill: #e5e5e5; stroke: var(--line); overflow: visible; }
.popover__legend { float: left; width: 100%; padding: 0; color: #888a85; line-height: 19px; }
.check { display: flex; align-items: center; gap: 5px; clear: both; height: 21px; }
.check input { appearance: none; width: 13px; height: 13px; border: 1px solid var(--line); background: #fff; }
.check input:checked::before { content: ""; display: block; width: 11px; height: 11px; background: #3465a4; clip-path: polygon(9% 45%, 27% 42%, 42% 62%, 85% 5%, 95% 15%, 45% 95%); }

.calendar { position: relative; width: 312px; margin: 18px 0 0 77px; padding: 18px 15px 6px; border: 1px solid var(--line); border-radius: 8px; background: var(--chrome); color: var(--ink); font: 14px/18px "Noto Sans", sans-serif; }
.calendar__tip { position: absolute; left: 141px; top: -15px; width: 28px; height: 15px; fill: var(--chrome); stroke: var(--line); overflow: visible; }
.calendar__nav { display: grid; grid-template-columns: 40px 80px repeat(4, 40px); align-items: center; height: 32px; font-weight: 600; text-align: center; }
.calendar__days { width: 280px; border-collapse: collapse; table-layout: fixed; text-align: center; }
.calendar__days th { height: 34px; padding: 0; font-size: 11px; font-weight: 600; }
.calendar__days td { height: 38px; padding: 0 0 18px; }
.out { color: #999; }

.heading--list { margin-top: 128px; }
.card { width: 325px; border: 1px solid #c0c0be; }
.card--list { margin: 27px 0 0 2px; }
.card--list::before { content: ""; position: absolute; width: 323px; border-top: 1px dashed #ddd; }
.card .trip--last { border-color: #c0c0be; }
.more { width: 100%; height: 44px; border: 0; background: #fff; }
.heading--variants { margin-top: 106px; }
.card--variant { margin: 12px 0 0 -1px; }
.card--variant .trip { border: 0; height: 72px; }
.remark { margin-top: 17px; font-size: 12px; line-height: 16px; }
.heading--icons { margin-top: 51px; }
.iconset { display: flex; gap: 8px; margin: 14px 0 0 2px; }
```
